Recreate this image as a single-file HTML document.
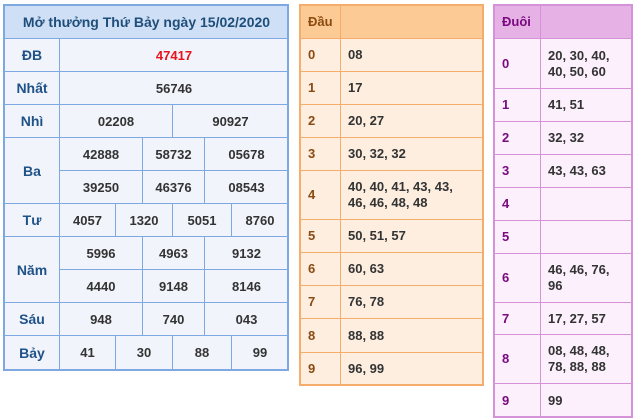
<!DOCTYPE html><html><head><meta charset="utf-8"><style>
body{margin:0;width:636px;height:420px;background:#fff;position:relative;font-family:"Liberation Sans",Arial,sans-serif;font-weight:bold;font-size:13px;overflow:hidden}
div{position:absolute;box-sizing:border-box}
.b{border-left:1px solid #7ea8e2;border-top:1px solid #7ea8e2;display:flex;align-items:center;justify-content:center;color:#333;background:#f1f4fa}
.l{color:#1f5288;font-size:14px}
.o{border-left:1px solid #f4ad6a;border-top:1px solid #f4ad6a;display:flex;align-items:center;padding-left:7px;color:#333;background:#fdeee0;line-height:16px}
.ol{color:#8a4a10}
.p{border-left:1px solid #d592d8;border-top:1px solid #d592d8;display:flex;align-items:center;padding-left:7px;color:#333;background:#fbf0fb;line-height:16px}
.pl{color:#7a0a80}
</style></head><body>
<!-- left table -->
<div class="b" style="left:4px;top:5px;width:284px;height:33px;background:#cfe0f6;color:#1f4e7a;font-size:14px">Mở thưởng Thứ Bảy ngày 15/02/2020</div>
<div class="b l" style="left:4px;top:38px;width:55px;height:33px">ĐB</div>
<div class="b" style="left:59px;top:38px;width:229px;height:33px;color:#e8141c">47417</div>
<div class="b l" style="left:4px;top:71px;width:55px;height:33px">Nhất</div>
<div class="b" style="left:59px;top:71px;width:229px;height:33px">56746</div>
<div class="b l" style="left:4px;top:104px;width:55px;height:33px">Nhì</div>
<div class="b" style="left:59px;top:104px;width:113px;height:33px">02208</div>
<div class="b" style="left:172px;top:104px;width:116px;height:33px">90927</div>
<div class="b l" style="left:4px;top:137px;width:55px;height:66px">Ba</div>
<div class="b" style="left:59px;top:137px;width:83px;height:33px">42888</div>
<div class="b" style="left:142px;top:137px;width:62px;height:33px">58732</div>
<div class="b" style="left:204px;top:137px;width:84px;height:33px">05678</div>
<div class="b" style="left:59px;top:170px;width:83px;height:33px">39250</div>
<div class="b" style="left:142px;top:170px;width:62px;height:33px">46376</div>
<div class="b" style="left:204px;top:170px;width:84px;height:33px">08543</div>
<div class="b l" style="left:4px;top:203px;width:55px;height:33px">Tư</div>
<div class="b" style="left:59px;top:203px;width:56px;height:33px">4057</div>
<div class="b" style="left:115px;top:203px;width:57px;height:33px">1320</div>
<div class="b" style="left:172px;top:203px;width:59px;height:33px">5051</div>
<div class="b" style="left:231px;top:203px;width:57px;height:33px">8760</div>
<div class="b l" style="left:4px;top:236px;width:55px;height:66px">Năm</div>
<div class="b" style="left:59px;top:236px;width:83px;height:33px">5996</div>
<div class="b" style="left:142px;top:236px;width:62px;height:33px">4963</div>
<div class="b" style="left:204px;top:236px;width:84px;height:33px">9132</div>
<div class="b" style="left:59px;top:269px;width:83px;height:33px">4440</div>
<div class="b" style="left:142px;top:269px;width:62px;height:33px">9148</div>
<div class="b" style="left:204px;top:269px;width:84px;height:33px">8146</div>
<div class="b l" style="left:4px;top:302px;width:55px;height:33px">Sáu</div>
<div class="b" style="left:59px;top:302px;width:83px;height:33px">948</div>
<div class="b" style="left:142px;top:302px;width:62px;height:33px">740</div>
<div class="b" style="left:204px;top:302px;width:84px;height:33px">043</div>
<div class="b l" style="left:4px;top:335px;width:55px;height:34px">Bảy</div>
<div class="b" style="left:59px;top:335px;width:56px;height:34px">41</div>
<div class="b" style="left:115px;top:335px;width:57px;height:34px">30</div>
<div class="b" style="left:172px;top:335px;width:59px;height:34px">88</div>
<div class="b" style="left:231px;top:335px;width:57px;height:34px">99</div>
<div style="left:3px;top:4px;width:286px;height:367px;border:2px solid #7ea8e2"></div>

<!-- Dau -->
<div class="o ol" style="left:300px;top:5px;width:40px;height:33px;background:#fcca94">Đầu</div>
<div class="o" style="left:340px;top:5px;width:143px;height:33px;background:#fcca94"></div>
<div class="o ol" style="left:300px;top:38px;width:40px;height:33px">0</div><div class="o" style="left:340px;top:38px;width:143px;height:33px">08</div>
<div class="o ol" style="left:300px;top:71px;width:40px;height:33px">1</div><div class="o" style="left:340px;top:71px;width:143px;height:33px">17</div>
<div class="o ol" style="left:300px;top:104px;width:40px;height:33px">2</div><div class="o" style="left:340px;top:104px;width:143px;height:33px">20, 27</div>
<div class="o ol" style="left:300px;top:137px;width:40px;height:33px">3</div><div class="o" style="left:340px;top:137px;width:143px;height:33px">30, 32, 32</div>
<div class="o ol" style="left:300px;top:170px;width:40px;height:49px">4</div><div class="o" style="left:340px;top:170px;width:143px;height:49px">40, 40, 41, 43, 43,<br>46, 46, 48, 48</div>
<div class="o ol" style="left:300px;top:219px;width:40px;height:33px">5</div><div class="o" style="left:340px;top:219px;width:143px;height:33px">50, 51, 57</div>
<div class="o ol" style="left:300px;top:252px;width:40px;height:33px">6</div><div class="o" style="left:340px;top:252px;width:143px;height:33px">60, 63</div>
<div class="o ol" style="left:300px;top:285px;width:40px;height:33px">7</div><div class="o" style="left:340px;top:285px;width:143px;height:33px">76, 78</div>
<div class="o ol" style="left:300px;top:318px;width:40px;height:34px">8</div><div class="o" style="left:340px;top:318px;width:143px;height:34px">88, 88</div>
<div class="o ol" style="left:300px;top:352px;width:40px;height:33px">9</div><div class="o" style="left:340px;top:352px;width:143px;height:33px">96, 99</div>
<div style="left:299px;top:4px;width:185px;height:382px;border:2px solid #f4ad6a"></div>

<!-- Duoi -->
<div class="p pl" style="left:494px;top:5px;width:46px;height:33px;background:#e6b2e6">Đuôi</div>
<div class="p" style="left:540px;top:5px;width:92px;height:33px;background:#e6b2e6"></div>
<div class="p pl" style="left:494px;top:38px;width:46px;height:50px">0</div><div class="p" style="left:540px;top:38px;width:92px;height:50px">20, 30, 40,<br>40, 50, 60</div>
<div class="p pl" style="left:494px;top:88px;width:46px;height:33px">1</div><div class="p" style="left:540px;top:88px;width:92px;height:33px">41, 51</div>
<div class="p pl" style="left:494px;top:121px;width:46px;height:33px">2</div><div class="p" style="left:540px;top:121px;width:92px;height:33px">32, 32</div>
<div class="p pl" style="left:494px;top:154px;width:46px;height:33px">3</div><div class="p" style="left:540px;top:154px;width:92px;height:33px">43, 43, 63</div>
<div class="p pl" style="left:494px;top:187px;width:46px;height:33px">4</div><div class="p" style="left:540px;top:187px;width:92px;height:33px"></div>
<div class="p pl" style="left:494px;top:220px;width:46px;height:33px">5</div><div class="p" style="left:540px;top:220px;width:92px;height:33px"></div>
<div class="p pl" style="left:494px;top:253px;width:46px;height:49px">6</div><div class="p" style="left:540px;top:253px;width:92px;height:49px">46, 46, 76,<br>96</div>
<div class="p pl" style="left:494px;top:302px;width:46px;height:32px">7</div><div class="p" style="left:540px;top:302px;width:92px;height:32px">17, 27, 57</div>
<div class="p pl" style="left:494px;top:334px;width:46px;height:49px">8</div><div class="p" style="left:540px;top:334px;width:92px;height:49px">08, 48, 48,<br>78, 88, 88</div>
<div class="p pl" style="left:494px;top:383px;width:46px;height:34px">9</div><div class="p" style="left:540px;top:383px;width:92px;height:34px">99</div>
<div style="left:493px;top:4px;width:140px;height:414px;border:2px solid #d592d8"></div>
</body></html>
